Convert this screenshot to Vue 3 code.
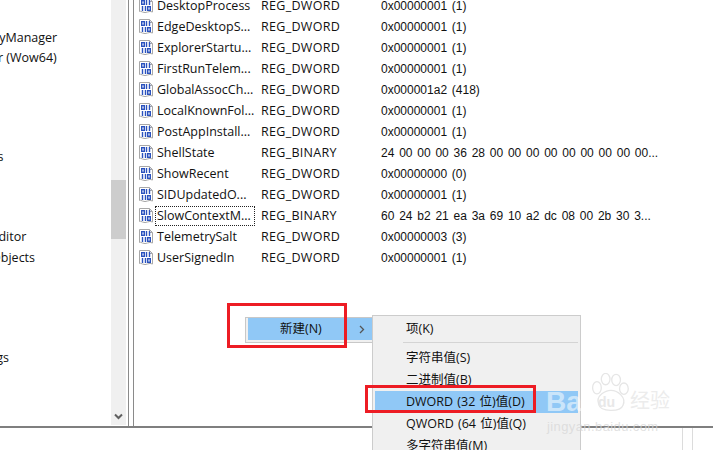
<script setup>
const treeRows = [
  { text: 'RegistryManager', shift: -41, top: 28 },
  { text: 'Explorer (Wow64)', shift: -46, top: 0 },
  { text: 'Settings', shift: -43, top: 79 },
  { text: 'RegEditor', shift: -30, top: 60 },
  { text: 'COM Objects', shift: -41, top: 1 },
  { text: 'Strings', shift: -31, top: 80 }
]

const values = [
  { name: 'DesktopProcess', type: 'REG_DWORD', data: '0x00000001 (1)' },
  { name: 'EdgeDesktopS...', type: 'REG_DWORD', data: '0x00000001 (1)' },
  { name: 'ExplorerStartu...', type: 'REG_DWORD', data: '0x00000001 (1)' },
  { name: 'FirstRunTelem...', type: 'REG_DWORD', data: '0x00000001 (1)' },
  { name: 'GlobalAssocCh...', type: 'REG_DWORD', data: '0x000001a2 (418)' },
  { name: 'LocalKnownFol...', type: 'REG_DWORD', data: '0x00000001 (1)' },
  { name: 'PostAppInstall...', type: 'REG_DWORD', data: '0x00000001 (1)' },
  { name: 'ShellState', type: 'REG_BINARY', data: '24 00 00 00 36 28 00 00 00 00 00 00 00 00 00...' },
  { name: 'ShowRecent', type: 'REG_DWORD', data: '0x00000000 (0)' },
  { name: 'SIDUpdatedO...', type: 'REG_DWORD', data: '0x00000001 (1)' },
  { name: 'SlowContextM...', type: 'REG_BINARY', data: '60 24 b2 21 ea 3a 69 10 a2 dc 08 00 2b 30 3...', focus: true },
  { name: 'TelemetrySalt', type: 'REG_DWORD', data: '0x00000003 (3)' },
  { name: 'UserSignedIn', type: 'REG_DWORD', data: '0x00000001 (1)' }
]

const subItems = [
  { text: '字符串值(S)' },
  { text: '二进制值(B)' },
  { text: 'DWORD (32 位)值(D)', active: true },
  { text: 'QWORD (64 位)值(Q)' },
  { text: '多字符串值(M)' }
]
</script>

<template>
  <div class="page">
    <div class="window">
      <div class="tree">
        <div
          v-for="row in treeRows"
          :key="row.text"
          class="tree-row"
          :style="{ marginLeft: row.shift + 'px', marginTop: row.top + 'px' }"
        >{{ row.text }}</div>
      </div>
      <div class="scrollbar">
        <div class="thumb"></div>
        <svg class="arrow" width="9" height="7" viewBox="0 0 9 7">
          <path d="M1 1.5 L4.5 5 L8 1.5" fill="none" stroke="#606060" stroke-width="2" />
        </svg>
      </div>
      <div class="splitter"></div>
      <div class="list">
        <div v-for="v in values" :key="v.name" class="row">
          <svg class="reg-icon" width="16" height="17" viewBox="0 0 16 17">
            <path d="M1.5 1.5 H11.5 L14.5 4.5 V15 Q12 13.8 9.5 15 T4.5 15 T1.5 14.5 Z" fill="#fff" stroke="#a8a8a8" />
            <path d="M11.5 1.5 V4.5 H14.5" fill="none" stroke="#a8a8a8" />
            <g fill="none" stroke="#2a52be" stroke-width="1.4">
              <rect x="3.7" y="3.7" width="2.6" height="3.6" />
              <path d="M8.5 3 V8 M11.5 3 V8 M4.5 9 V14 M7.5 9 V14" />
              <rect x="9.7" y="9.7" width="2.6" height="3.6" />
            </g>
          </svg>
          <span class="name" :class="{ focused: v.focus }">{{ v.name }}</span>
          <span class="type">{{ v.type }}</span>
          <span class="data">{{ v.data }}</span>
        </div>
      </div>
    </div>
    <div class="status">
      <div class="status-cell"></div>
      <div class="status-cell last"></div>
    </div>

    <div class="menu-new">
      <div class="menu-new-item">
        <span class="menu-new-label">新建(N)</span>
        <svg class="chevron" width="6" height="9" viewBox="0 0 6 9">
          <path d="M1 1 L4.5 4.5 L1 8" fill="none" stroke="#555" stroke-width="1.3" />
        </svg>
      </div>
    </div>

    <div class="submenu">
      <div class="sub-item first">项(K)</div>
      <div class="sub-sep"></div>
      <div
        v-for="item in subItems"
        :key="item.text"
        class="sub-item"
        :class="{ active: item.active }"
      >{{ item.text }}</div>
    </div>

    <div class="red-box box-new"></div>
    <div class="red-box box-dword"></div>

    <div class="watermark">
      <span class="wm-bai">Bai</span>
      <svg class="wm-paw" width="40" height="40" viewBox="0 0 46 46">
        <g fill="#fff" stroke="#e6e6e6" stroke-width="1.5">
          <ellipse cx="8" cy="17" rx="5" ry="7" />
          <ellipse cx="18" cy="7" rx="5" ry="6.5" />
          <ellipse cx="30" cy="8" rx="5" ry="6.5" />
          <ellipse cx="39" cy="18" rx="5" ry="6.5" />
          <path d="M10 36 C6 26 18 20 24 20 C32 20 42 28 38 37 C35 45 12 45 10 36 Z" />
        </g>
      </svg>
      <span class="wm-du">du</span>
      <span class="wm-jy">经验</span>
      <span class="wm-url">jingyan.baidu.com</span>
    </div>
  </div>
</template>

<style scoped>
.page {
  position: relative;
  width: 713px;
  height: 450px;
  overflow: hidden;
  background: #fff;
  color: #111;
  font-family: "Open Sans", "Noto Sans CJK SC", sans-serif;
  font-size: 12.5px;
}
.window {
  display: flex;
  height: 426px;
  overflow: hidden;
  border-bottom: 2px solid #7f7f7f;
}
.tree {
  width: 111px;
  overflow: hidden;
  white-space: nowrap;
}
.tree-row {
  height: 20px;
  line-height: 20px;
}
.scrollbar {
  position: relative;
  width: 15px;
  height: 425px;
  background: #f0f0f0;
}
.thumb {
  height: 59px;
  margin-top: 180px;
  background: #cdcdcd;
}
.arrow {
  position: absolute;
  left: 3px;
  bottom: 5px;
}
.splitter {
  width: 6px;
  margin-left: 2px;
  box-sizing: border-box;
  border-left: 1px solid #8a8a8a;
  border-right: 1px solid #8a8a8a;
}
.list {
  flex: 1;
  margin-top: -5px;
  padding-left: 4px;
}
.row {
  display: flex;
  align-items: center;
  height: 21px;
  white-space: nowrap;
}
.reg-icon {
  flex: none;
  margin-right: 1px;
}
.name {
  flex: none;
  width: 100px;
  margin-right: 6px;
  padding-left: 1px;
  line-height: 18px;
  border: 1px solid transparent;
  box-sizing: border-box;
}
.name.focused {
  border: 1px dotted #222;
}
.type {
  flex: none;
  width: 120px;
  letter-spacing: 0.3px;
}
.data {
  font-family: "Liberation Sans", sans-serif;
  font-size: 12px;
  word-spacing: 1.45px;
}
.status {
  display: flex;
  justify-content: flex-end;
  height: 22px;
}
.status-cell {
  width: 9px;
  border-left: 1px solid #dcdcdc;
}
.status-cell.last {
  width: 20px;
}
.menu-new {
  position: absolute;
  left: 245px;
  top: 317px;
  width: 127px;
  height: 26px;
  padding: 0 0 2px 2px;
  box-sizing: border-box;
  background: #f0f0f0;
  border: 1px solid #c8c8c8;
  border-right: none;
}
.menu-new-item {
  display: flex;
  align-items: center;
  height: 22px;
  background: #90c8f6;
}
.menu-new-label {
  flex: 1;
  margin-left: 32px;
  padding-bottom: 3px;
}
.chevron {
  margin-right: 7px;
}
.submenu {
  position: absolute;
  left: 372px;
  top: 315px;
  width: 209px;
  height: 150px;
  padding: 2px;
  box-sizing: border-box;
  background: #f0f0f0;
  border: 1px solid #ccc;
}
.sub-item {
  height: 22px;
  line-height: 22px;
  padding-left: 31px;
  white-space: nowrap;
  word-spacing: 1px;
}
.sub-item.active {
  background: #90c8f6;
}
.sub-sep {
  height: 1px;
  margin: 2px 0 4px 28px;
  background: #d4d4d4;
}
.red-box {
  position: absolute;
  border: 3px solid #ed1c24;
  box-sizing: border-box;
}
.box-new {
  left: 227px;
  top: 303px;
  width: 120px;
  height: 45px;
}
.box-dword {
  left: 365px;
  top: 385px;
  width: 171px;
  height: 28px;
}
.watermark {
  position: absolute;
  left: 545px;
  top: 372px;
  width: 168px;
  height: 70px;
}
.wm-bai,
.wm-du,
.wm-jy,
.wm-url {
  position: absolute;
  white-space: nowrap;
}
.wm-bai {
  left: 1px;
  top: 13px;
  font: bold 28px/34px "Liberation Sans", sans-serif;
  color: rgba(255, 255, 255, 0.55);
}
.wm-paw {
  position: absolute;
  left: 45px;
  top: 1px;
}
.wm-du {
  left: 53px;
  top: 21px;
  font: bold 14px/18px "Liberation Sans", sans-serif;
  color: #e8e8e8;
}
.wm-jy {
  left: 85px;
  top: 16px;
  font: 20px/24px "Noto Sans CJK SC", sans-serif;
  color: #ececec;
}
.wm-url {
  left: 2px;
  top: 47px;
  font: 13px/16px "Liberation Sans", sans-serif;
  color: rgba(215, 215, 215, 0.75);
  letter-spacing: 0.4px;
}
</style>
